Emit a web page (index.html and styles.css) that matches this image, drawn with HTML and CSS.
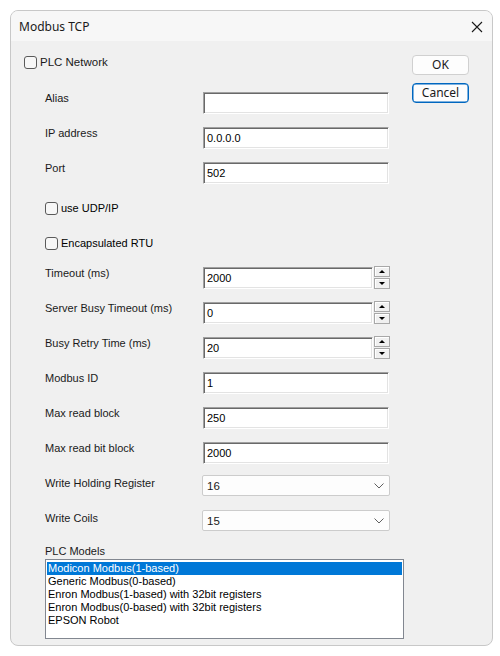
FILE: index.html
```html
<!DOCTYPE html>
<html>
<head>
<meta charset="utf-8">
<link rel="stylesheet" href="styles.css">
</head>
<body>
<div class="window">
  <div class="titlebar">
    <span class="title">Modbus TCP</span>
    <svg class="close" width="12" height="12" viewBox="0 0 12 12"><path d="M1 1 L11 11 M11 1 L1 11" stroke="#1a1a1a" stroke-width="1.1" fill="none"/></svg>
  </div>
  <div class="content">
    <div class="form">
      <label class="check top-check"><span class="box"></span><span>PLC Network</span></label>
      <div class="rows">
        <div class="row"><span class="lbl">Alias</span><div class="field"></div></div>
        <div class="row"><span class="lbl">IP address</span><div class="field">0.0.0.0</div></div>
        <div class="row"><span class="lbl">Port</span><div class="field">502</div></div>
        <div class="row crow"><label class="check"><span class="box"></span><span>use UDP/IP</span></label></div>
        <div class="row crow"><label class="check"><span class="box"></span><span>Encapsulated RTU</span></label></div>
        <div class="row"><span class="lbl">Timeout (ms)</span><div class="spin"><div class="field short">2000</div><div class="spinbtns"><span class="sb"><i class="up"></i></span><span class="sb"><i class="down"></i></span></div></div></div>
        <div class="row"><span class="lbl">Server Busy Timeout (ms)</span><div class="spin"><div class="field short">0</div><div class="spinbtns"><span class="sb"><i class="up"></i></span><span class="sb"><i class="down"></i></span></div></div></div>
        <div class="row"><span class="lbl">Busy Retry Time (ms)</span><div class="spin"><div class="field short">20</div><div class="spinbtns"><span class="sb"><i class="up"></i></span><span class="sb"><i class="down"></i></span></div></div></div>
        <div class="row"><span class="lbl">Modbus ID</span><div class="field">1</div></div>
        <div class="row"><span class="lbl">Max read block</span><div class="field">250</div></div>
        <div class="row"><span class="lbl">Max read bit block</span><div class="field">2000</div></div>
        <div class="row"><span class="lbl">Write Holding Register</span><div class="select"><span>16</span><svg width="10" height="6" viewBox="0 0 10 6"><path d="M0.5 0.5 L5 5 L9.5 0.5" stroke="#606060" stroke-width="1" fill="none"/></svg></div></div>
        <div class="row"><span class="lbl">Write Coils</span><div class="select"><span>15</span><svg width="10" height="6" viewBox="0 0 10 6"><path d="M0.5 0.5 L5 5 L9.5 0.5" stroke="#606060" stroke-width="1" fill="none"/></svg></div></div>
      </div>
      <div class="models-label">PLC Models</div>
      <div class="listbox">
        <div class="item sel">Modicon Modbus(1-based)</div>
        <div class="item">Generic Modbus(0-based)</div>
        <div class="item">Enron Modbus(1-based) with 32bit registers</div>
        <div class="item">Enron Modbus(0-based) with 32bit registers</div>
        <div class="item">EPSON Robot</div>
      </div>
    </div>
    <div class="side">
      <button class="btn">OK</button>
      <button class="btn default">Cancel</button>
    </div>
  </div>
</div>
</body>
</html>
```
FILE: styles.css
```css
html, body {
  margin: 0;
  padding: 0;
  background: #ffffff;
}
body {
  font-family: "Liberation Sans", Arial, sans-serif;
  font-size: 11px;
  color: #000;
}
.window {
  margin: 10px 0 0 10px;
  width: 483px;
  height: 636px;
  box-sizing: border-box;
  border: 1px solid #c8c8c8;
  border-radius: 8px;
  background: #f0f0f0;
  overflow: hidden;
}
.titlebar {
  height: 30px;
  background: #f7f7f7;
  display: flex;
  align-items: center;
  justify-content: space-between;
  padding: 0 9px 0 8px;
}
.title {
  font-family: "Noto Sans", "Open Sans", sans-serif;
  font-size: 12px;
  color: #1a1a1a;
  margin-top: 1px;
}
.close {
  margin-top: 1px;
}
.content {
  display: flex;
}
.form {
  width: 401px;
  padding: 14px 0 0 13px;
  box-sizing: border-box;
}
.check {
  display: flex;
  align-items: center;
  gap: 3px;
  height: 14px;
}
.box {
  width: 11px;
  height: 11px;
  border: 1px solid #5a5a5a;
  border-radius: 3px;
  background: #f7f7f7;
}
.top-check {
  font-size: 11.5px;
  color: #1a1a1a;
}
.rows {
  margin-top: 23px;
  padding-left: 21px;
  display: flex;
  flex-direction: column;
  gap: 13px;
}
.row {
  display: flex;
  align-items: flex-start;
  height: 22px;
}
.crow {
  align-items: center;
}
.lbl {
  width: 158px;
  flex: none;
  line-height: 12px;
  margin-top: 0;
  color: #1a1a1a;
}
.field {
  width: 186px;
  height: 22px;
  box-sizing: border-box;
  background: #fff;
  border: 1px solid;
  border-color: #a0a0a0 #ffffff #ffffff #a0a0a0;
  box-shadow: inset 1px 1px 0 #696969, inset -1px -1px 0 #e3e3e3;
  padding: 0 0 0 3px;
  line-height: 20px;
  font-size: 11px;
}
.field.short {
  width: 170px;
}
.spin {
  display: flex;
  gap: 1px;
}
.spinbtns {
  display: flex;
  flex-direction: column;
  gap: 1px;
  margin-top: -1px;
}
.sb {
  width: 16px;
  height: 11px;
  box-sizing: border-box;
  border: 1px solid #a8a8a8;
  box-shadow: inset 1px 1px 0 #fff;
  background: #f0f0f0;
  display: flex;
  align-items: center;
  justify-content: center;
}
.sb i {
  display: block;
  width: 0;
  height: 0;
  border-left: 3px solid transparent;
  border-right: 3px solid transparent;
}
.sb i.up {
  border-bottom: 3px solid #000;
}
.sb i.down {
  border-top: 3px solid #000;
}
.select {
  width: 188px;
  height: 21px;
  margin: -2px 0 0 -1px;
  box-sizing: border-box;
  background: #fdfdfd;
  border: 1px solid #cccccc;
  border-radius: 2px;
  display: flex;
  align-items: center;
  justify-content: space-between;
  padding: 0 5px 0 4px;
  font-size: 11.5px;
  color: #1a1a1a;
}
.select span {
  margin-top: 1px;
}
.models-label {
  margin: 11px 0 0 21px;
  line-height: 12px;
  font-size: 11px;
  color: #1a1a1a;
}
.listbox {
  margin: 2px 0 0 21px;
  width: 359px;
  height: 80px;
  box-sizing: border-box;
  border: 1px solid #828790;
  background: #fff;
  padding: 2px 1px;
}
.item {
  height: 13px;
  line-height: 13px;
  padding-left: 1px;
  font-size: 11px;
  color: #000;
}
.item.sel {
  background: #0078d7;
  color: #fff;
}
.side {
  display: flex;
  flex-direction: column;
  gap: 8px;
  padding-top: 14px;
}
.btn {
  width: 57px;
  height: 20px;
  box-sizing: border-box;
  background: #fdfdfd;
  border: 1px solid #d0d0d0;
  border-radius: 4px;
  font-family: "Noto Sans", "Open Sans", sans-serif;
  font-size: 12px;
  color: #1a1a1a;
  padding: 0;
  line-height: 16px;
}
.btn.default {
  border: 1px solid #0067c0;
  box-shadow: inset 0 0 0 0.5px #0067c0;
}
```
